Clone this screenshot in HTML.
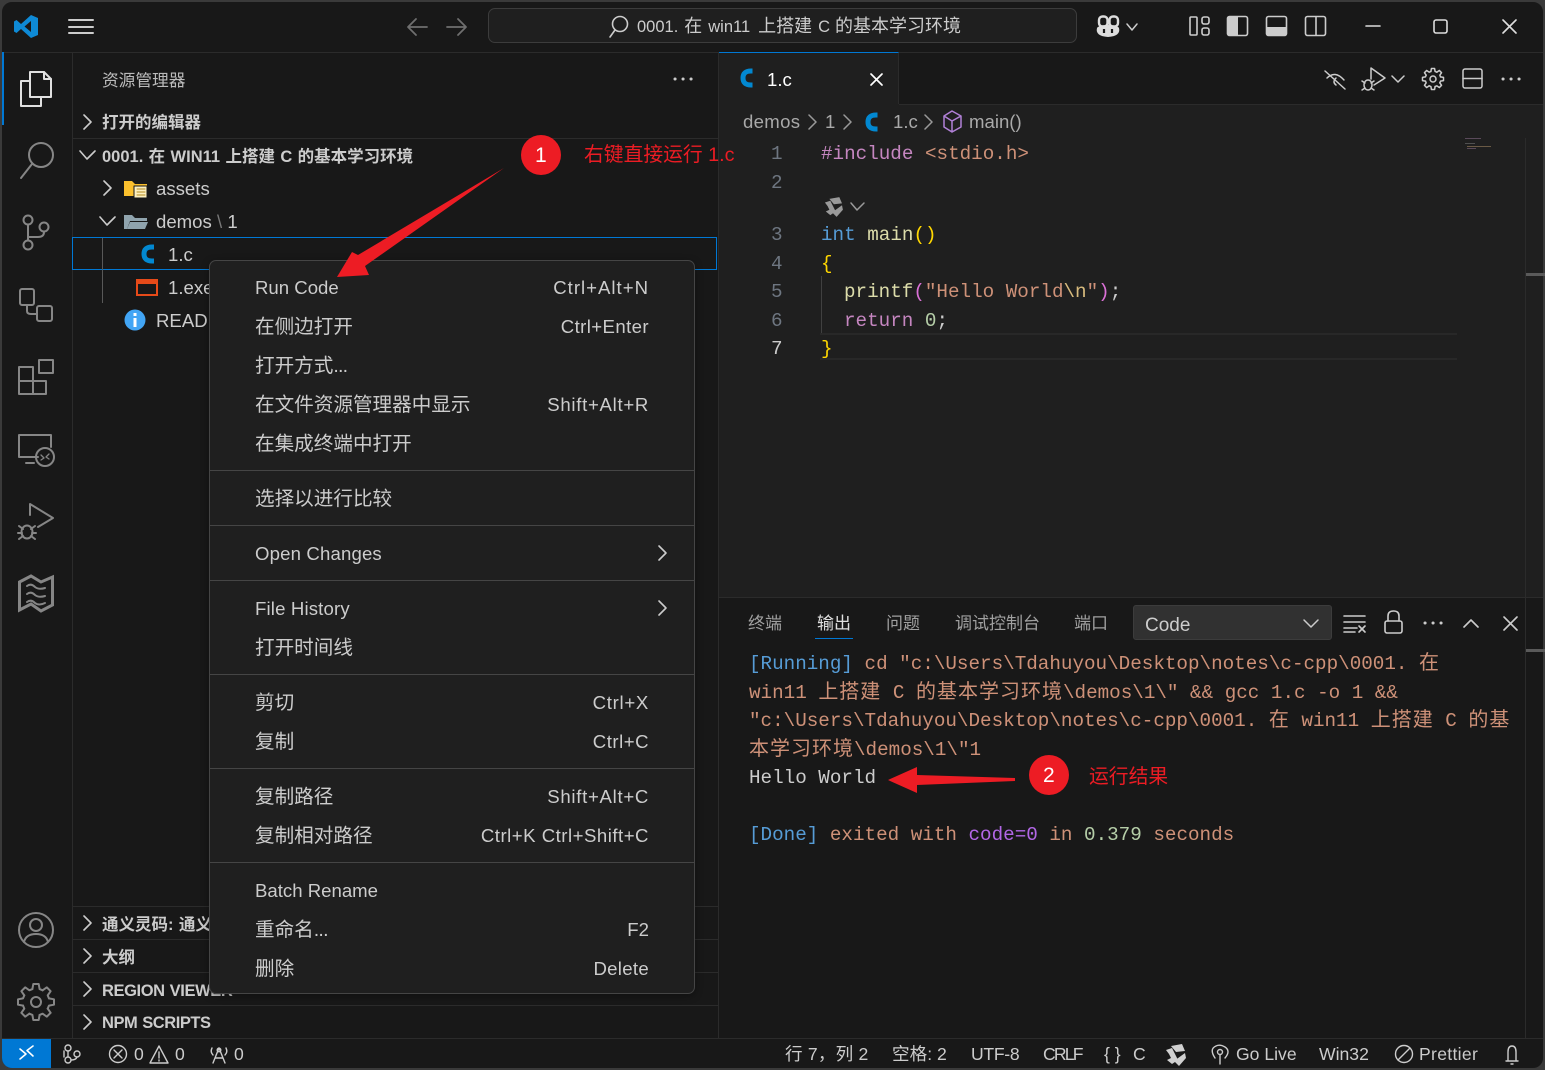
<!DOCTYPE html>
<html><head><meta charset="utf-8"><style>
html,body{margin:0;padding:0;width:1545px;height:1070px;overflow:hidden;background:#3a3a3a}
#app{position:absolute;left:0;top:0;width:1545px;height:1070px;box-sizing:border-box;border:2px solid #3a3a3a;border-radius:12px;background:#181818;overflow:hidden}
#r{position:absolute;left:0;top:0;width:1545px;height:1070px;overflow:hidden}
.b{position:absolute}
.t{position:absolute;white-space:pre;height:30px;line-height:30px;font-family:"Liberation Sans","Noto Sans CJK SC",sans-serif;font-size:18.6px;color:#ccc;transform:translateY(1px)}
.c{font-size:19.6px}
.bd{font-weight:bold;font-size:16.5px;color:#ccc;word-spacing:.8px}
.m{position:absolute;white-space:pre;height:30px;line-height:30px;font-family:"Liberation Mono","Noto Sans CJK SC",monospace;font-size:19.25px;color:#ce9178;transform:translateY(2px)}
.m i{font-style:normal;font-size:20px;letter-spacing:1px}
.s{font-size:17.6px;color:#ccc}
.k{right:896px}
svg{position:absolute;left:0;top:0}
</style></head><body>
<div id="app"></div>
<div id="r">
<!-- structure -->
<div class="b" style="left:2px;top:52px;width:1541px;height:1px;background:#2b2b2b"></div>
<div class="b" style="left:72px;top:52px;width:1px;height:986px;background:#2b2b2b"></div>
<div class="b" style="left:2px;top:52px;width:2px;height:73px;background:#0078d4"></div>
<div class="b" style="left:718px;top:53px;width:1px;height:985px;background:#2b2b2b"></div>
<div class="b" style="left:719px;top:104px;width:824px;height:493px;background:#1f1f1f"></div>
<div class="b" style="left:719px;top:52px;width:180px;height:52px;background:#1f1f1f;border-top:1px solid #0078d4;border-right:1px solid #2b2b2b;box-sizing:border-box"></div>
<div class="b" style="left:899px;top:104px;width:644px;height:1px;background:#2b2b2b"></div>
<div class="b" style="left:719px;top:597px;width:824px;height:1px;background:#2b2b2b"></div>
<div class="b" style="left:1525px;top:138px;width:1px;height:900px;background:#2b2b2b"></div>
<div class="b" style="left:1526px;top:273px;width:19px;height:3px;background:#5a5a5a"></div>
<div class="b" style="left:1526px;top:649px;width:19px;height:3px;background:#5a5a5a"></div>
<div class="b" style="left:2px;top:1038px;width:1541px;height:1px;background:#2b2b2b"></div>
<div class="b" style="left:2px;top:1039px;width:49px;height:29px;background:#0078d4;border-bottom-left-radius:10px"></div>
<div class="b" style="left:73px;top:138px;width:645px;height:1px;background:#2b2b2b"></div>
<div class="b" style="left:73px;top:906px;width:645px;height:1px;background:#2b2b2b"></div>
<div class="b" style="left:73px;top:939px;width:645px;height:1px;background:#2b2b2b"></div>
<div class="b" style="left:73px;top:972px;width:645px;height:1px;background:#2b2b2b"></div>
<div class="b" style="left:73px;top:1005px;width:645px;height:1px;background:#2b2b2b"></div>
<div class="b" style="left:488px;top:8px;width:589px;height:35px;box-sizing:border-box;background:#1f1f1f;border:1px solid #3c3c3c;border-radius:7px"></div>
<!-- selected row -->
<div class="b" style="left:72px;top:237px;width:645px;height:33px;box-sizing:border-box;border:1px solid #0078d4"></div>
<div class="b" style="left:102px;top:238px;width:1px;height:65px;background:#585858"></div>
<!-- editor line highlight -->
<div class="b" style="left:820px;top:333px;width:637px;height:27px;box-sizing:border-box;border-top:2px solid #282828;border-bottom:2px solid #282828"></div>
<div class="b" style="left:821px;top:276px;width:1px;height:57px;background:#404040"></div>
<!-- minimap -->
<div class="b" style="left:1465px;top:138px;width:16px;height:1px;background:#5a4a5a"></div>
<div class="b" style="left:1465px;top:143px;width:10px;height:1px;background:#505050"></div>
<div class="b" style="left:1467px;top:146px;width:24px;height:1px;background:#6a5a45"></div>
<div class="b" style="left:1467px;top:148px;width:9px;height:1px;background:#5a4a5a"></div>

<!-- title -->
<div class="t" style="left:637px;top:10px;font-size:16.5px;word-spacing:1.4px;color:#ccc">0001. <span style="font-size:18px">在</span> win11 <span style="font-size:18px;margin-left:2px">上搭建</span> C <span style="font-size:18px;margin-left:-1px">的基本学习环境</span></div>

<!-- sidebar text -->
<div class="t c" style="left:102px;top:65px;font-size:16.7px;color:#bbb">资源管理器</div>
<div class="t bd" style="left:102px;top:107px">打开的编辑器</div>
<div class="t bd" style="left:102px;top:141px">0001. 在 WIN11 上搭建 C 的基本学习环境</div>
<div class="t" style="left:156px;top:173px">assets</div>
<div class="t" style="left:156px;top:206px">demos<span style="color:#777"> \ </span>1</div>
<div class="t" style="left:168px;top:239px">1.c</div>
<div class="t" style="left:168px;top:272px">1.exe</div>
<div class="t" style="left:156px;top:305px">README</div>
<div class="t bd" style="left:102px;top:909px">通义灵码: 通义灵码</div>
<div class="t bd" style="left:102px;top:942px">大纲</div>
<div class="t bd" style="left:102px;top:975px;letter-spacing:-.4px">REGION VIEWER</div>
<div class="t bd" style="left:102px;top:1007px;letter-spacing:-.45px">NPM SCRIPTS</div>

<!-- tabs / breadcrumbs -->
<div class="t" style="left:767px;top:64px;color:#fff">1.c</div>
<div class="t" style="left:743px;top:106px;color:#a9a9a9;letter-spacing:.3px">demos</div>
<div class="t" style="left:825px;top:106px;color:#a9a9a9">1</div>
<div class="t" style="left:893px;top:106px;color:#a9a9a9">1.c</div>
<div class="t" style="left:969px;top:106px;color:#a9a9a9">main()</div>

<!-- line numbers -->
<div class="m" style="left:771px;top:137px;color:#6e7681">1</div>
<div class="m" style="left:771px;top:166px;color:#6e7681">2</div>
<div class="m" style="left:771px;top:218px;color:#6e7681">3</div>
<div class="m" style="left:771px;top:247px;color:#6e7681">4</div>
<div class="m" style="left:771px;top:275px;color:#6e7681">5</div>
<div class="m" style="left:771px;top:304px;color:#6e7681">6</div>
<div class="m" style="left:771px;top:332px;color:#ccc">7</div>
<!-- code -->
<div class="m" style="left:821px;top:137px"><span style="color:#c586c0">#include</span> &lt;stdio.h&gt;</div>
<div class="m" style="left:821px;top:218px"><span style="color:#569cd6">int</span> <span style="color:#dcdcaa">main</span><span style="color:#ffd700">()</span></div>
<div class="m" style="left:821px;top:247px;color:#ffd700">{</div>
<div class="m" style="left:844px;top:275px"><span style="color:#dcdcaa">printf</span><span style="color:#da70d6">(</span>"Hello World<span style="color:#d7ba7d">\n</span>"<span style="color:#da70d6">)</span><span style="color:#ccc">;</span></div>
<div class="m" style="left:844px;top:304px"><span style="color:#c586c0">return</span> <span style="color:#b5cea8">0</span><span style="color:#ccc">;</span></div>
<div class="m" style="left:821px;top:332px;color:#ffd700">}</div>

<!-- panel -->
<div class="t c" style="left:748px;top:608px;font-size:17px;color:#a0a0a0">终端</div>
<div class="t c" style="left:817px;top:608px;font-size:17px;color:#e0e0e0">输出</div>
<div class="t c" style="left:886px;top:608px;font-size:17px;color:#a0a0a0">问题</div>
<div class="t c" style="left:955px;top:608px;font-size:17px;color:#a0a0a0">调试控制台</div>
<div class="t c" style="left:1074px;top:608px;font-size:17px;color:#a0a0a0">端口</div>
<div class="b" style="left:815px;top:638px;width:38px;height:1px;background:#0078d4"></div>
<div class="b" style="left:1133px;top:605px;width:199px;height:35px;box-sizing:border-box;background:#313131;border:1px solid #3c3c3c;border-radius:3px"></div>
<div class="t" style="left:1145px;top:610px;font-size:19px">Code</div>

<div class="m" style="left:749px;top:647px"><span style="color:#569cd6">[Running]</span> cd "c:\Users\Tdahuyou\Desktop\notes\c-cpp\0001. <i>在</i></div>
<div class="m" style="left:749px;top:676px">win11 <i>上搭建</i> C <i>的基本学习环境</i>\demos\1\" &amp;&amp; gcc 1.c -o 1 &amp;&amp;</div>
<div class="m" style="left:749px;top:704px">"c:\Users\Tdahuyou\Desktop\notes\c-cpp\0001. <i>在</i> win11 <i>上搭建</i> C <i>的基</i></div>
<div class="m" style="left:749px;top:733px"><i>本学习环境</i>\demos\1\"1</div>
<div class="m" style="left:749px;top:761px;color:#ccc">Hello World</div>
<div class="m" style="left:749px;top:818px"><span style="color:#569cd6">[Done]</span> exited with <span style="color:#b267e6">code=0</span> in <span style="color:#b5cea8">0.379</span> seconds</div>

<!-- status -->
<div class="t s" style="left:134px;top:1038px">0</div>
<div class="t s" style="left:175px;top:1038px">0</div>
<div class="t s" style="left:234px;top:1038px">0</div>
<div class="t s" style="left:785px;top:1038px;letter-spacing:.2px">行 7，列 2</div>
<div class="t s" style="left:892px;top:1038px">空格: 2</div>
<div class="t s" style="left:971px;top:1038px;letter-spacing:-.3px">UTF-8</div>
<div class="t s" style="left:1043px;top:1038px;letter-spacing:-1.800px">CRLF</div>
<div class="t s" style="left:1104px;top:1038px">{ }</div>
<div class="t s" style="left:1133px;top:1038px">C</div>
<div class="t s" style="left:1236px;top:1038px">Go Live</div>
<div class="t s" style="left:1319px;top:1038px">Win32</div>
<div class="t s" style="left:1419px;top:1038px;letter-spacing:.3px">Prettier</div>

<!-- main icons -->
<svg width="1545" height="1070" viewBox="0 0 1545 1070" fill="none" stroke-linecap="round" stroke-linejoin="round">
<defs><g id="gear"><g id="g4"><g id="g2"><path id="g1" d="M-.2 -.72L-.15 -1L.15 -1L.2 -.72L.368 -.65" vector-effect="non-scaling-stroke"/><use href="#g1" transform="rotate(45)"/></g><use href="#g2" transform="rotate(90)"/></g><use href="#g4" transform="rotate(180)"/></g>
<g id="tongyi"><path d="M-4 -9L7 -11L10 -4L1 -3Z"/><path d="M10 -2L11 3L4 11L-1 6Z"/><path d="M-9 -5L-3 -7L3 5L-3 9L-8 5L-4 3L-6 -1Z"/></g></defs>
<!-- logo -->
<path fill="#0e8ad6" fill-rule="evenodd" d="M31 15L38 18V35L31 38L21 29L16.500 33L14 31.500V21.500L16.500 20L21 24ZM31 21L24.500 26.500L31 32Z"/>
<!-- menu -->
<path stroke="#ccc" stroke-width="2" d="M69 20H93M69 27H93M69 33H93"/>
<!-- nav -->
<path stroke="#6f6f6f" stroke-width="1.800" d="M409 27H427M416 19L408 27L416 35M447 27H465M458 19L466 27L458 35"/>
<!-- search -->
<g stroke="#ccc" stroke-width="1.600"><circle cx="620" cy="24" r="7.500"/><path d="M615 30L610 37"/></g>
<!-- copilot -->
<path fill="#ddd" d="M1097 28Q1095 36 1108 37Q1121 36 1119 28Q1117 25 1108 25Q1099 25 1097 28Z"/>
<g stroke="#ddd" stroke-width="2.400"><rect x="1099" y="16.500" width="8.500" height="10" rx="3.500"/><rect x="1109.500" y="16.500" width="8.500" height="10" rx="3.500"/></g>
<path d="M1104 29V33M1112 29V33" stroke="#181818" stroke-width="2.200" stroke-linecap="butt"/>
<path stroke="#ccc" stroke-width="1.500" d="M1127 24L1132 30L1137 24"/>
<!-- layout -->
<g stroke="#ccc" stroke-width="1.600"><rect x="1190" y="17" width="7" height="18" rx="1"/><rect x="1202" y="17" width="7" height="7" rx="2"/><rect x="1202" y="28" width="7" height="7" rx="2"/>
<rect x="1227.500" y="16.500" width="20" height="19" rx="2"/><rect x="1266.500" y="16.500" width="20" height="19" rx="2"/><rect x="1305.500" y="16.500" width="20" height="19" rx="2"/><path d="M1316 17V35"/></g>
<rect x="1228" y="17" width="10" height="18" fill="#ccc"/><rect x="1267" y="27" width="19" height="8" fill="#ccc"/>
<!-- window -->
<path stroke="#ddd" stroke-width="1.600" d="M1366 26H1380M1503 20L1516 33M1516 20L1503 33"/><rect x="1434" y="20" width="13" height="13" rx="2" stroke="#ddd" stroke-width="1.600"/>
<!-- activity -->
<g stroke="#e0e0e0" stroke-width="2"><path d="M30 72H44L51 79V97H30Z"/><path d="M44 72V79H51"/><path d="M29 81H21V106H41V97"/></g>
<g stroke="#868686" stroke-width="2"><circle cx="41" cy="155" r="12"/><path d="M32 164L21 178"/>
<circle cx="28" cy="220" r="4.500"/><circle cx="44" cy="227" r="4.500"/><circle cx="28" cy="245" r="4.500"/><path d="M28 225V240M44 232Q44 237 38 237H28"/>
<rect x="20" y="289" width="14" height="16" rx="2"/><rect x="37" y="306" width="15" height="15" rx="2"/><path d="M27 305V311Q27 314 31 314H37"/>
<path d="M19 367H33V394H19ZM19 381H46V394H33M39 360H53V373H39Z"/>
<path d="M38 457H19V435H51V447M26 463H34"/><circle cx="45" cy="457" r="9"/><path d="M41 455L44 458L41 460M49 454L46 457L49 459" stroke-width="1.300"/>
<path d="M30 515V504L53 518L38 527"/><ellipse cx="27" cy="532" rx="5.500" ry="6.500"/><path d="M19 526L23 529M35 526L31 529M18 533H22M36 533H32M19 539L23 536M35 539L31 536"/></g>
<path stroke="#868686" stroke-width="3" stroke-linejoin="miter" d="M19.500 582L31 576L41 582L52.500 577V605L41 611L31 604L19.500 610Z"/>
<path stroke="#868686" stroke-width="2" d="M27 586Q31 583 35 587Q39 590 45 588M27 594Q31 591 35 595Q39 598 45 596M27 602Q31 599 35 603Q39 606 45 603"/>
<g stroke="#868686" stroke-width="2"><circle cx="36" cy="930" r="17"/><circle cx="36" cy="925" r="6"/><path d="M24 942Q26 934 36 934Q46 934 48 942"/>
<circle cx="36" cy="1002" r="5"/></g>
<use href="#gear" transform="translate(36 1002) scale(18)" stroke="#868686" stroke-width="2"/>
<!-- tree chevrons -->
<g stroke="#ccc" stroke-width="1.600"><path d="M84 115L91 122L84 129M80 151L87 159L95 151M104 181L111 188L104 195M100 217L107 225L115 217M84 916L91 923L84 930M84 949L91 956L84 963M84 982L91 989L84 996M84 1015L91 1022L84 1029"/></g>
<path stroke="#ccc" stroke-width="3" stroke-dasharray="0.100 7.900" d="M675 79H692"/>
<!-- file icons -->
<path fill="#fbc02d" d="M124 181H132L135 184H147V196H124Z"/><path fill="#fdf0c0" stroke="#181818" d="M134 186H147V198H134Z"/><path stroke="#b48a20" d="M137 189H145M137 192H145M137 195H145"/>
<path fill="#90a4ae" d="M124 215H132L135 218H147V221H130L127 229H124Z"/><path fill="#90a4ae" d="M130 222H148L145 229H127Z"/>
<path stroke="#0288d1" stroke-width="5" stroke-linecap="butt" stroke-linejoin="round" d="M154 247H152Q144 247 144 254Q144 261 152 261H154"/>
<rect x="137" y="280" width="20" height="15" stroke="#e64a19" stroke-width="2" stroke-linejoin="miter"/><path d="M137 282H157" stroke="#e64a19" stroke-width="4" stroke-linecap="butt"/>
<circle cx="135" cy="320" r="10.500" fill="#42a5f5"/><path stroke="#fff" stroke-width="3" stroke-linecap="butt" d="M135 318V327M135 313V316"/>
<!-- tab & breadcrumb -->
<path stroke="#0288d1" stroke-width="5" stroke-linecap="butt" d="M752.500 71H751Q743 71 743 78Q743 85 751 85H752.500"/>
<path stroke="#fff" stroke-width="1.700" d="M871 74L882 85M882 74L871 85"/>
<path stroke="#999" stroke-width="1.500" d="M809 115L816 122L809 129M844 115L851 122L844 129M925 115L932 122L925 129"/>
<path stroke="#0288d1" stroke-width="5" stroke-linecap="butt" d="M877.500 115H876Q868 115 868 122Q868 129 876 129H877.500"/>
<path stroke="#b180d7" stroke-width="1.500" d="M952 111L961 116V127L952 132L944 127V116ZM944 116L952 121L961 116M952 121V132"/>
<!-- editor actions -->
<g stroke="#ccc" stroke-width="1.500"><path d="M1325 71L1345 89M1327 78Q1335 70 1344 80M1336 78Q1332 82 1336 85"/><path d="M1371 79V68L1385 78L1374 85"/><ellipse cx="1368" cy="85" rx="4" ry="5"/><path d="M1362 81L1365 83M1374 81L1371 83M1362 90L1365 88M1374 90L1371 88"/><path d="M1392 76L1398 82L1404 76"/>
<circle cx="1433" cy="79" r="3"/><rect x="1463" y="69" width="19" height="19" rx="2"/><path d="M1463 78.500H1482"/></g>
<use href="#gear" transform="translate(1433 79) scale(10.500)" stroke="#ccc" stroke-width="1.500"/>
<path stroke="#ccc" stroke-width="3" stroke-dasharray="0.100 7.900" d="M1503 79H1520"/>
<!-- codelens -->
<use href="#tongyi" transform="translate(833 207) scale(.9)" fill="#9a9a9a"/>
<path stroke="#9a9a9a" stroke-width="1.500" d="M851 203L857 210L864 203"/>
<!-- panel actions -->
<path stroke="#ccc" stroke-width="1.500" d="M1304 620L1311 627L1318 620"/>
<g stroke="#ccc" stroke-width="1.600"><path d="M1344 616H1365M1344 622H1365M1344 628H1357M1344 632H1355M1359 626L1365 632M1365 626L1359 632"/>
<rect x="1385" y="621" width="17" height="12" rx="2"/><path d="M1388 621V616Q1388 611 1393.500 611Q1399 611 1399 616V621M1464 627L1471 620L1478 627M1504 617L1517 630M1517 617L1504 630"/></g>
<path stroke="#ccc" stroke-width="3" stroke-dasharray="0.100 7.900" d="M1425 623H1442"/>
<!-- status icons -->
<path stroke="#fff" stroke-width="1.600" d="M20 1049L26 1054L20 1059M33 1046L27 1050.500L33 1056"/>
<g stroke="#ccc" stroke-width="1.400"><circle cx="68" cy="1048" r="3"/><circle cx="68" cy="1060" r="3"/><circle cx="77" cy="1054" r="3"/><path d="M68 1051V1057M77 1057Q76 1060 71 1060M64 1051V1057"/>
<circle cx="118" cy="1054" r="8.500"/><path d="M114 1050L122 1058M122 1050L114 1058M159 1046L168 1063H150Z"/><path d="M159 1052V1058M159 1060V1061"/>
<path d="M219 1048L213 1063M219 1048L225 1063M215 1058H223M212 1048Q210 1052 213 1055M226 1048Q228 1052 225 1055"/><circle cx="219" cy="1050" r="1.800"/>
<circle cx="1220" cy="1052" r="2.500"/><path d="M1215 1058Q1209 1049 1216 1046Q1220 1044 1225 1047Q1231 1051 1225 1058M1220 1055V1064"/>
<circle cx="1404" cy="1054" r="8.500"/><path d="M1398 1060L1410 1048M1506 1061H1518M1508 1061V1052Q1508 1046 1512 1046Q1516 1046 1516 1052V1061M1511 1064H1513"/></g>
<use href="#tongyi" transform="translate(1175 1055)" fill="#d0d0d0"/>
</svg>

<!-- context menu -->
<div class="b" style="left:209px;top:260px;width:486px;height:734px;box-sizing:border-box;background:#1f1f1f;border:1px solid #454545;border-radius:7px;box-shadow:0 2px 8px rgba(0,0,0,.36)"></div>
<div class="b" style="left:210px;top:470px;width:484px;height:1px;background:#454545"></div>
<div class="b" style="left:210px;top:525px;width:484px;height:1px;background:#454545"></div>
<div class="b" style="left:210px;top:580px;width:484px;height:1px;background:#454545"></div>
<div class="b" style="left:210px;top:674px;width:484px;height:1px;background:#454545"></div>
<div class="b" style="left:210px;top:768px;width:484px;height:1px;background:#454545"></div>
<div class="b" style="left:210px;top:862px;width:484px;height:1px;background:#454545"></div>
<div class="t" style="left:255px;top:272px">Run Code</div><div class="t k" style="top:272px;letter-spacing:1px">Ctrl+Alt+N</div>
<div class="t c" style="left:255px;top:311px">在侧边打开</div><div class="t k" style="top:311px;letter-spacing:.4px">Ctrl+Enter</div>
<div class="t c" style="left:255px;top:350px">打开方式<span style="letter-spacing:-.8px">...</span></div>
<div class="t c" style="left:255px;top:389px">在文件资源管理器中显示</div><div class="t k" style="top:389px;letter-spacing:.7px">Shift+Alt+R</div>
<div class="t c" style="left:255px;top:428px">在集成终端中打开</div>
<div class="t c" style="left:255px;top:483px">选择以进行比较</div>
<div class="t" style="left:255px;top:538px;letter-spacing:.15px">Open Changes</div>
<div class="t" style="left:255px;top:593px;letter-spacing:.15px">File History</div>
<div class="t c" style="left:255px;top:632px">打开时间线</div>
<div class="t c" style="left:255px;top:687px">剪切</div><div class="t k" style="top:687px;letter-spacing:.7px">Ctrl+X</div>
<div class="t c" style="left:255px;top:726px">复制</div><div class="t k" style="top:726px;letter-spacing:.5px">Ctrl+C</div>
<div class="t c" style="left:255px;top:781px">复制路径</div><div class="t k" style="top:781px;letter-spacing:.7px">Shift+Alt+C</div>
<div class="t c" style="left:255px;top:820px">复制相对路径</div><div class="t k" style="top:820px;letter-spacing:.5px">Ctrl+K Ctrl+Shift+C</div>
<div class="t" style="left:255px;top:875px">Batch Rename</div>
<div class="t c" style="left:255px;top:914px">重命名<span style="letter-spacing:-.8px">...</span></div><div class="t k" style="top:914px">F2</div>
<div class="t c" style="left:255px;top:953px">删除</div><div class="t k" style="top:953px;letter-spacing:.3px">Delete</div>

<!-- annotations -->
<svg width="1545" height="1070" viewBox="0 0 1545 1070" fill="none">
<path stroke="#ccc" stroke-width="1.600" stroke-linecap="round" stroke-linejoin="round" d="M659 546L666 553L659 560M659 601L666 608L659 615"/>
<path fill="#ed1c24" d="M504 168L358 255L352 252L337 277L369 275L365 266Z"/>
<path fill="#ed1c24" d="M1015 778V781L917 785L917 793L888 780L917 767L917 775Z"/>
<circle cx="541" cy="155" r="20" fill="#ed1c24"/><circle cx="1049" cy="775" r="20" fill="#ed1c24"/>
</svg>
<div class="t" style="left:535px;top:140px;font-size:21px;color:#fff">1</div>
<div class="t" style="left:1043px;top:760px;font-size:21px;color:#fff">2</div>
<div class="t" style="left:584px;top:139px;font-size:19.800px;color:#ed1c24">右键直接运行 1.c</div>
<div class="t" style="left:1089px;top:761px;font-size:19.800px;color:#ed1c24">运行结果</div>
</div>
</body></html>
